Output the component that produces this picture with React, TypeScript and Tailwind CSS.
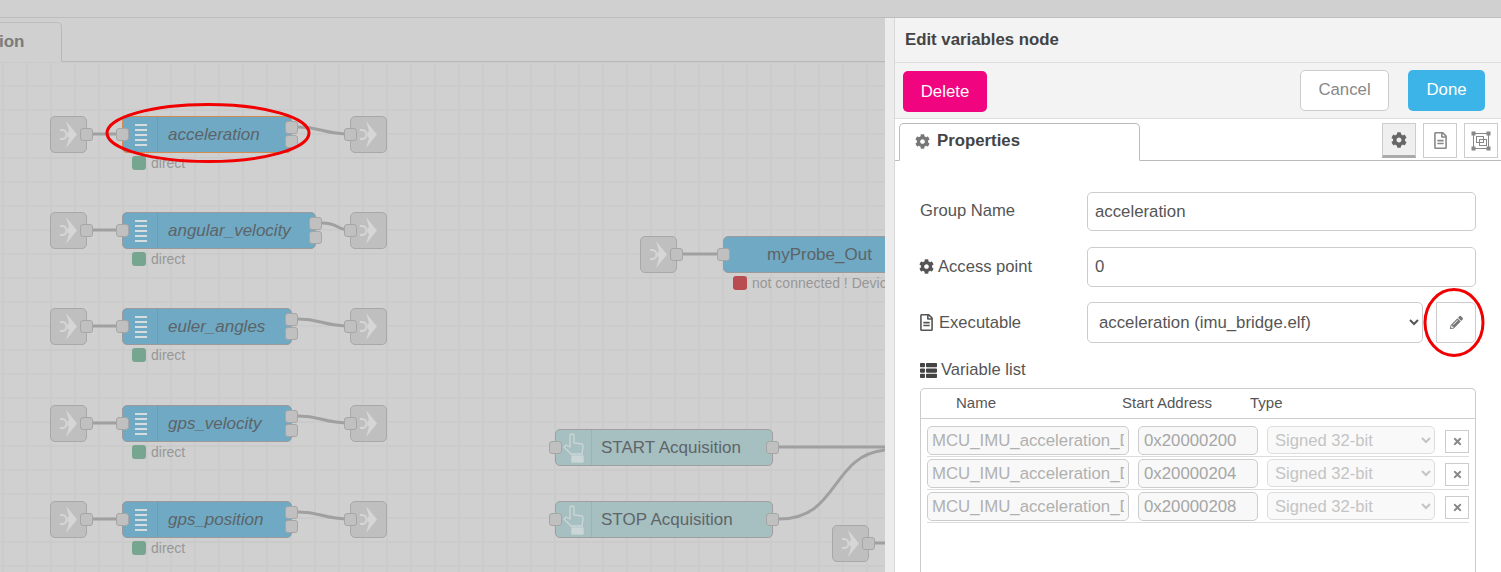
import { FaCog, FaPencilAlt, FaRegFileAlt, FaThList, FaTimes } from "react-icons/fa";

interface VarRow {
  name: string;
  address: string;
}

const groups = [
  { name: "acceleration", top: 116, width: 170, selected: true },
  { name: "angular_velocity", top: 212, width: 194, selected: false },
  { name: "euler_angles", top: 308, width: 170, selected: false },
  { name: "gps_velocity", top: 405, width: 170, selected: false },
  { name: "gps_position", top: 501, width: 170, selected: false },
];

const rows: VarRow[] = [
  { name: "MCU_IMU_acceleration_Data_x", address: "0x20000200" },
  { name: "MCU_IMU_acceleration_Data_y", address: "0x20000204" },
  { name: "MCU_IMU_acceleration_Data_z", address: "0x20000208" },
];

function Port({ x, y }: { x: number; y: number }) {
  return (
    <div
      className="absolute h-[13px] w-[13px] rounded-[3px] border border-[#a6a6a6] bg-[#c0c0c0]"
      style={{ left: x, top: y }}
    />
  );
}

function LinkNode({ x, y, side }: { x: number; y: number; side: "in" | "out" }) {
  return (
    <>
      <div
        className="absolute h-[37px] w-[37px] rounded-[5px] border border-[#a8a8a8] bg-[#bfbfbf]"
        style={{ left: x, top: y }}
      >
        <svg width="35" height="35" viewBox="0 0 35 35" fill="none">
          <path d="M15 4 L26 17.5 L15 31 L18 21 Q14.5 17.5 18 14 Z" fill="#d6d6d6" />
          <path d="M9 13 H11 A4.5 4.5 0 0 1 11 22 H9" stroke="#d6d6d6" strokeWidth="2" />
        </svg>
      </div>
      <Port x={side === "in" ? x + 30 : x - 6} y={y + 12} />
    </>
  );
}

function FunctionNode({ name, top, width, selected }: { name: string; top: number; width: number; selected: boolean }) {
  return (
    <>
      <div
        className={`absolute flex h-[37px] items-stretch rounded-[5px] border bg-[#6fa9c4] ${
          selected ? "border-[#d08c50]" : "border-[#9a9a9a]"
        }`}
        style={{ left: 122, top, width }}
      >
        <div className="flex w-[35px] flex-col items-center justify-center gap-[3px] border-r border-[#65a0ba] pl-px">
          {[0, 1, 2, 3, 4].map((i) => (
            <div key={i} className="h-[2px] w-[12px] bg-[#d5dde0]" />
          ))}
        </div>
        <div className="flex-1 pl-[10px] text-[17px] leading-[35px] text-[#5d6468] italic">{name}</div>
      </div>
      <Port x={116} y={top + 12} />
      <Port x={115 + width} y={top + 5} />
      <Port x={115 + width} y={top + 19} />
      <div className="absolute flex items-center gap-[5px]" style={{ left: 132, top: top + 39 }}>
        <div className="h-[14px] w-[14px] rounded-[3px] bg-[#76a590]" />
        <span className="text-[14px] leading-4 text-[#979797]">direct</span>
      </div>
    </>
  );
}

function InjectNode({ label, top }: { label: string; top: number }) {
  return (
    <>
      <div
        className="absolute flex h-[37px] w-[218px] items-stretch rounded-[5px] border border-[#9f9f9f] bg-[#a6bfc1]"
        style={{ left: 555, top }}
      >
        <div className="flex w-[36px] items-center justify-center border-r border-[#9ab5b6]">
          <svg width="24" height="30" viewBox="0 0 24 30" fill="none" stroke="#ccd6d6" strokeWidth="1.3">
            <path d="M8 3 Q8 1 10 1 Q12 1 12 3 L12 10 L20 11 Q21 11 21 13 L20 21 L9 21 L2 14 L4 12 L8 14 Z" />
            <rect x="10" y="23" width="11" height="6" fill="#ccd6d6" />
          </svg>
        </div>
        <div className="flex-1 pl-[9px] text-[17px] leading-[35px] text-[#5f6568]">{label}</div>
      </div>
      <Port x={549} y={top + 12} />
      <Port x={766} y={top + 12} />
    </>
  );
}

function FlowNodes() {
  return (
    <div className="relative h-full w-full">
      <svg className="absolute inset-0 h-full w-full" fill="none" stroke="#a0a0a0" strokeWidth="3">
        <path d="M87 134 H122" />
        <path d="M298 127 C322 127 322 134 350 134" />
        <path d="M87 230 H122" />
        <path d="M322 223 C340 223 335 230 350 230" />
        <path d="M87 326 H122" />
        <path d="M298 319 C322 319 322 326 350 326" />
        <path d="M87 423 H122" />
        <path d="M298 416 C322 416 322 423 350 423" />
        <path d="M87 519 H122" />
        <path d="M298 512 C322 512 322 519 350 519" />
        <path d="M677 254 H723" />
        <path d="M779 447 H886" />
        <path d="M779 519 C840 519 830 455 886 450" />
        <path d="M870 543 H886" />
      </svg>
      {groups.map((g) => (
        <div key={g.name}>
          <LinkNode x={50} y={g.top} side="in" />
          <FunctionNode name={g.name} top={g.top} width={g.width} selected={g.selected} />
          <LinkNode x={350} y={g.top} side="out" />
        </div>
      ))}
      <LinkNode x={640} y={236} side="in" />
      <div className="absolute top-[236px] left-[723px] h-[37px] w-[180px] rounded-[5px] border border-[#9a9a9a] bg-[#6fa9c4] pl-[43px] text-[17px] leading-[35px] text-[#5d6468]">
        myProbe_Out
      </div>
      <Port x={717} y={248} />
      <div className="absolute top-[275px] left-[733px] flex items-center gap-[5px]">
        <div className="h-[14px] w-[14px] rounded-[3px] bg-[#b84c50]" />
        <span className="text-[14px] leading-4 whitespace-nowrap text-[#979797]">not connected ! Device not found</span>
      </div>
      <InjectNode label="START Acquisition" top={429} />
      <InjectNode label="STOP Acquisition" top={501} />
      <LinkNode x={832} y={525} side="in" />
    </div>
  );
}

function Canvas() {
  return (
    <div className="flex w-[885px] shrink-0 flex-col overflow-hidden">
      <div className="flex h-[44px] shrink-0 items-end border-b border-[#b8b8b8]">
        <div className="-mb-px flex h-[40px] w-[62px] items-center rounded-tr-[5px] border-t border-r border-b border-t-[#bdbdbd] border-r-[#b8b8b8] border-b-[#d0d0d0]">
          <span className="-ml-px text-[17px] font-bold whitespace-nowrap text-[#7b7b7b]">ion</span>
        </div>
      </div>
      <div className="relative flex-1 bg-[linear-gradient(#cbcbcb_2px,transparent_2px),linear-gradient(90deg,#cbcbcb_2px,transparent_2px)] bg-[size:24px_24px] bg-[position:2px_-1px]">
        <div className="absolute top-[-62px] left-0 h-[572px] w-[886px]">
          <FlowNodes />
        </div>
      </div>
    </div>
  );
}

function IconTab({ active, children }: { active?: boolean; children: React.ReactNode }) {
  return (
    <div
      className={`flex h-[35px] w-[34px] items-center justify-center border border-[#cccccc] ${
        active ? "border-b-[3px] border-b-[#aaaaaa] bg-[#efefef] text-[#666666]" : "bg-white text-[#888888]"
      }`}
    >
      {children}
    </div>
  );
}

function Panel() {
  return (
    <div className="flex flex-1 bg-white">
      <div className="w-[9px] shrink-0 bg-[#ececec]" />
      <div className="flex min-w-0 flex-1 flex-col border-l border-[#d8d8d8] text-[#555555]">
        <div className="flex h-[45px] shrink-0 items-center border-b border-[#dddddd] bg-[#f3f3f3] pl-[10px] text-[16.8px] font-bold text-[#444444]">
          Edit variables node
        </div>
        <div className="flex h-[56px] shrink-0 items-start border-b border-[#dddddd] bg-[#f3f3f3] pt-[7px] pr-[19px] pl-[8px]">
          <button className="mt-px h-[41px] w-[84px] rounded-[5px] bg-[#f0047f] text-[16.8px] text-white">Delete</button>
          <div className="flex-1" />
          <button className="h-[41px] w-[89px] rounded-[5px] border border-[#cccccc] bg-white pb-[2px] text-[16.8px] text-[#888888]">
            Cancel
          </button>
          <button className="ml-[19px] h-[41px] w-[77px] rounded-[5px] bg-[#3cb4e7] pb-[2px] text-[16.8px] text-white">
            Done
          </button>
        </div>
        <div className="flex h-[42px] shrink-0 items-end border-b border-[#bbbbbb] pr-[6px] pl-[4px]">
          <div className="-mb-px flex h-[38px] w-[241px] items-center gap-[7px] rounded-t-[5px] border border-[#bbbbbb] border-b-white bg-white pb-[2px] pl-[15px] text-[16.8px] font-bold text-[#444444]">
            <FaCog className="text-[15px] text-[#777777]" />
            Properties
          </div>
          <div className="flex-1" />
          <div className="mb-[2px] flex gap-[7px]">
            <IconTab active>
              <FaCog className="text-[16px]" />
            </IconTab>
            <IconTab>
              <FaRegFileAlt className="text-[17px]" />
            </IconTab>
            <IconTab>
              <svg width="20" height="20" viewBox="0 0 20 20" fill="none" stroke="#888888">
                <rect x="2.5" y="2.5" width="15" height="15" />
                <rect x="5.5" y="5.5" width="7" height="6" />
                <rect x="8.5" y="8.5" width="7" height="6" />
                <rect x="1" y="1" width="3" height="3" fill="#888888" />
                <rect x="16" y="1" width="3" height="3" fill="#888888" />
                <rect x="1" y="16" width="3" height="3" fill="#888888" />
                <rect x="16" y="16" width="3" height="3" fill="#888888" />
              </svg>
            </IconTab>
          </div>
        </div>
        <div className="flex flex-1 flex-col overflow-hidden pt-[31px] pr-[28px] pl-[25px]">
          <div className="flex h-[39px] items-center">
            <label className="mb-px w-[167px] text-[16.6px]">Group Name</label>
            <input
              readOnly
              value="acceleration"
              className="h-[39px] flex-1 rounded-[5px] border border-[#cccccc] px-[7px] text-[16.8px] text-[#555555] outline-none"
            />
          </div>
          <div className="mt-[16px] flex h-[40px] items-center">
            <label className="flex w-[167px] items-center gap-[4px] text-[16.6px]">
              <FaCog className="-ml-px text-[15px]" />
              Access point
            </label>
            <input
              readOnly
              value="0"
              className="h-[40px] flex-1 rounded-[5px] border border-[#cccccc] px-[7px] text-[16.8px] text-[#555555] outline-none"
            />
          </div>
          <div className="mt-[15px] flex h-[41px] items-center">
            <label className="flex w-[167px] items-center gap-[4px] pt-px text-[16.6px]">
              <FaRegFileAlt className="-ml-[2px] text-[17px]" />
              Executable
            </label>
            <select className="h-[41px] w-[336px] rounded-[5px] border border-[#cccccc] bg-white px-[7px] text-[16.8px] text-[#555555] outline-none">
              <option>acceleration (imu_bridge.elf)</option>
            </select>
            <div className="flex-1" />
            <div className="flex h-[41px] w-[40px] items-center justify-center rounded-r-[5px] border border-[#cccccc] text-[#777777]">
              <FaPencilAlt className="text-[13px]" />
            </div>
          </div>
          <div className="mt-[17px] flex h-[20px] items-center gap-[4px] text-[16.6px]">
            <FaThList className="text-[17px] text-[#444444]" />
            Variable list
          </div>
          <div className="mt-[8px] flex-1 rounded-t-[5px] border border-b-0 border-[#cccccc]">
            <div className="relative flex h-[30px] items-center border-b border-[#cccccc] text-[15px]">
              <span className="w-[201px] pl-[35px]">Name</span>
              <span className="w-[128px]">Start Address</span>
              <span>Type</span>
            </div>
            <div className="flex flex-col gap-[2px] px-[6px] pt-[7px]">
              {rows.map((r) => (
                <div key={r.address} className="flex h-[31px] items-start border-b border-[#dddddd]">
                  <input
                    disabled
                    value={r.name}
                    className="h-[29px] w-[202px] rounded-[5px] border border-[#cccccc] bg-[#f8f8f8] px-[4px] text-[16.8px] text-[#b0b0b0]"
                  />
                  <input
                    disabled
                    value={r.address}
                    className="ml-[9px] h-[29px] w-[120px] rounded-[5px] border border-[#cccccc] bg-[#f8f8f8] px-[5px] text-[16.8px] text-[#a6a6a6]"
                  />
                  <select
                    disabled
                    className="ml-[9px] h-[28px] w-[168px] rounded-[5px] border border-[#dddddd] bg-[#f9f9f9] px-[3px] text-[16.6px] text-[#c4c4c4] opacity-100"
                  >
                    <option>Signed 32-bit</option>
                  </select>
                  <div className="mt-[4px] ml-[10px] flex h-[23px] w-[24px] items-center justify-center border border-[#cccccc] text-[#888888]">
                    <FaTimes className="text-[11px]" />
                  </div>
                </div>
              ))}
            </div>
          </div>
        </div>
      </div>
    </div>
  );
}

export default function App() {
  return (
    <div className="relative flex h-[572px] w-[1501px] flex-col overflow-hidden bg-[#d0d0d0] font-['Liberation_Sans',Arial,sans-serif]">
      <div className="h-[18px] shrink-0 border-b border-[#bdbdbd]" />
      <div className="flex min-h-0 flex-1">
        <Canvas />
        <Panel />
      </div>
      <svg className="pointer-events-none absolute inset-0 h-full w-full" fill="none" stroke="#f00000" strokeWidth="3">
        <ellipse cx="208" cy="133" rx="101" ry="28.5" />
        <ellipse cx="1454" cy="322.5" rx="29" ry="33" />
      </svg>
    </div>
  );
}
